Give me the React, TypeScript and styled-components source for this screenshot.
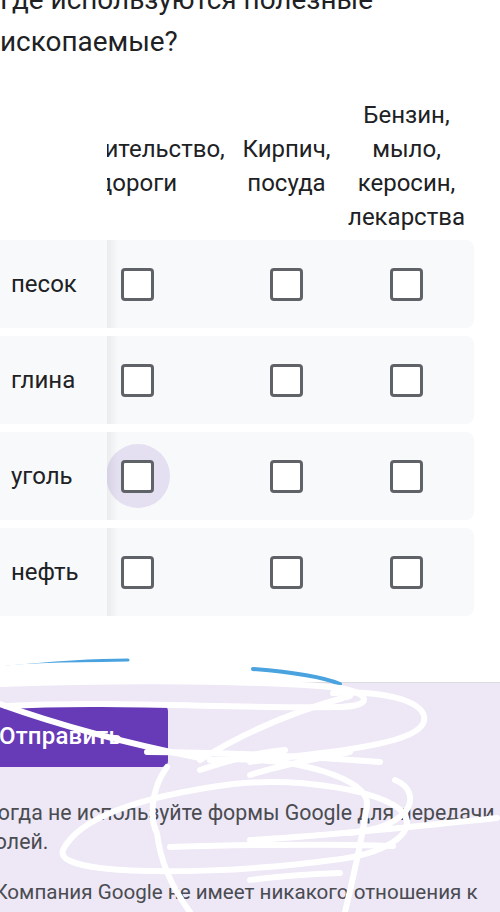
import React, { useLayoutEffect, useRef } from "react";
import styled, { createGlobalStyle } from "styled-components";

const GlobalStyle = createGlobalStyle`
  html, body { margin: 0; padding: 0; }
  body {
    background: #ede7f6;
    font-family: Roboto, "Noto Sans", Arial, sans-serif;
    color: #202124;
    overflow: hidden;
  }
`;

const Viewport = styled.div`
  position: relative;
  width: 500px;
  height: 912px;
  overflow: hidden;
  background: #ede7f6;
`;

const Card = styled.section`
  background: #fff;
  border-bottom: 1px solid #dadce0;
  margin-top: -21px;
  padding-bottom: 66px;
`;

const TitleRow = styled.div`
  display: flex;
  align-items: flex-start;
  gap: 18px;
  padding-right: 28px;
`;

const Title = styled.h2`
  flex: 1;
  margin: 0;
  font-size: 27.9px;
  line-height: 42px;
  font-weight: 400;
  color: #202124;
`;

const Points = styled.span`
  flex: none;
  font-size: 21.8px;
  line-height: 42px;
  color: #70757a;
  margin-top: -7px;
`;

const GridScroller = styled.div`
  width: 474px;
  margin-top: 35px;
  overflow-x: auto;
  scrollbar-width: none;
  &::-webkit-scrollbar { display: none; }
`;

const GridTable = styled.div`
  display: flex;
  flex-direction: column;
  gap: 8px;
  width: max-content;
`;

const cols = "107px 193px 105px 135px";

const HeaderRow = styled.div`
  display: grid;
  grid-template-columns: ${cols};
  align-items: center;
  margin-bottom: -2px;
`;

const CornerCell = styled.div`
  position: sticky;
  left: 0;
  z-index: 2;
  align-self: stretch;
  background: #fff;
`;

const ColumnHead = styled.div`
  padding: 0 6px;
  text-align: center;
  font-size: 24px;
  line-height: 34px;
  color: #202124;
`;

const Row = styled.div`
  display: grid;
  grid-template-columns: ${cols};
  height: 88px;
  background: #f8f9fa;
  border-radius: 8px;
`;

const RowLabel = styled.div`
  position: sticky;
  left: 0;
  z-index: 2;
  display: flex;
  align-items: center;
  padding-left: 11px;
  background: #f8f9fa;
  font-size: 24px;
  color: #202124;

  &::after {
    content: "";
    position: absolute;
    top: 0;
    bottom: 0;
    right: -11px;
    width: 11px;
    background: linear-gradient(to right, rgba(0, 0, 0, 0.055), rgba(0, 0, 0, 0));
  }
`;

const Cell = styled.div`
  display: flex;
  align-items: center;
  justify-content: center;
`;

const BoxHolder = styled.span`
  position: relative;
  z-index: 0;
  display: inline-flex;
`;

const Box = styled.span<{ $focused?: boolean }>`
  position: relative;
  box-sizing: border-box;
  width: 33px;
  height: 33px;
  border: 3px solid #5f6368;
  border-radius: 4px;
  background: #fff;

  &::before {
    content: "";
    display: ${(p) => (p.$focused ? "block" : "none")};
    position: absolute;
    left: 50%;
    top: 50%;
    width: 64px;
    height: 64px;
    margin: -32px 0 0 -32px;
    border-radius: 50%;
    background: #e4dff1;
    z-index: -1;
  }
`;

const Footer = styled.footer`
  margin-left: -41px;
  width: 554px;
  padding-top: 22px;
`;

const SubmitButton = styled.button`
  height: 62px;
  margin-left: 16px;
  padding: 0 46px 0 24px;
  border: none;
  border-radius: 6px;
  background: #673ab7;
  color: #fff;
  font-family: Roboto, "Noto Sans", sans-serif;
  font-size: 24px;
  font-weight: 500;
  letter-spacing: 0.2px;
`;

const Notes = styled.div`
  display: flex;
  flex-direction: column;
  gap: 22px;
  margin-top: 31px;
`;

const Note = styled.p<{ $center?: boolean }>`
  margin: 0;
  padding: ${(p) => (p.$center ? "0 6px" : "0")};
  font-size: ${(p) => (p.$center ? "20.6px" : "21.3px")};
  line-height: 29px;
  color: #4a4c51;
  text-align: ${(p) => (p.$center ? "center" : "left")};
`;

const Scribble = styled.svg`
  position: absolute;
  left: 0;
  top: 0;
  width: 500px;
  height: 912px;
  pointer-events: none;
`;

const columns = ["Строительство, дороги", "Кирпич, посуда", "Бензин, мыло, керосин, лекарства"];
const rows = ["песок", "глина", "уголь", "нефть"];

export default function App() {
  const scroller = useRef<HTMLDivElement>(null);
  useLayoutEffect(() => {
    if (scroller.current) scroller.current.scrollLeft = 9999;
  }, []);

  return (
    <>
      <GlobalStyle />
      <Viewport>
        <Card>
          <TitleRow>
            <Title>Где используются полезные ископаемые?</Title>
            <Points>4 балла</Points>
          </TitleRow>
          <GridScroller ref={scroller}>
            <GridTable>
              <HeaderRow>
                <CornerCell />
                {columns.map((c) => (
                  <ColumnHead key={c}>{c}</ColumnHead>
                ))}
              </HeaderRow>
              {rows.map((r) => (
                <Row key={r}>
                  <RowLabel>{r}</RowLabel>
                  {columns.map((c, i) => (
                    <Cell key={c}>
                      <BoxHolder>
                        <Box $focused={r === "уголь" && i === 0} />
                      </BoxHolder>
                    </Cell>
                  ))}
                </Row>
              ))}
            </GridTable>
          </GridScroller>
        </Card>
        <Footer>
          <SubmitButton>Отправить</SubmitButton>
          <Notes>
            <Note>Никогда не используйте формы Google для передачи паролей.</Note>
            <Note $center>
              Компания Google не имеет никакого отношения к этому контенту. Сообщить о нарушении - Условия использования
            </Note>
          </Notes>
        </Footer>
        <Scribble viewBox="0 0 500 912">
          <g fill="none" strokeLinecap="round" strokeLinejoin="round">
            <path d="M0 668 C 40 664, 90 660, 128 660" stroke="#4aa3df" strokeWidth="3" />
            <path d="M253 669 C 290 672, 320 676, 340 684" stroke="#4aa3df" strokeWidth="4" />
            <circle cx="343" cy="698" r="3" fill="#4aa3df" />
          </g>
          <g fill="none" stroke="#fff" strokeWidth="6" strokeLinecap="round" strokeLinejoin="round">
            <path d="M0 669 C 30 666, 70 664, 130 666" />
            <path d="M2 684 C 120 680, 260 680, 340 688 C 372 694, 372 706, 340 707 C 240 709, 110 700, 6 706" />
            <path d="M0 704 C 50 722, 110 740, 200 758" />
            <path d="M200 760 C 240 735, 290 712, 350 696" />
            <path d="M333 693 C 380 690, 420 700, 424 716 C 428 734, 390 744, 330 752 C 290 757, 260 760, 250 762" />
            <path d="M250 775 C 280 765, 320 758, 350 752" />
            <path d="M147 752 C 220 752, 300 756, 380 762" />
            <path d="M200 770 C 230 760, 260 752, 285 750" />
            <path d="M395 780 C 410 786, 415 800, 405 812 C 390 828, 370 830, 350 833" />
            <path d="M63 850 C 80 815, 150 795, 233 784 C 300 777, 380 790, 403 812 C 420 835, 380 855, 333 860 C 260 870, 160 875, 100 868 C 70 864, 60 858, 63 850" />
            <path d="M167 767 C 150 790, 150 820, 157 833 C 160 860, 170 885, 190 912" />
            <path d="M210 760 C 300 755, 370 780, 367 805 C 362 840, 355 870, 345 912" />
            <path d="M170 847 C 240 845, 320 843, 393 846" />
            <path d="M250 840 C 330 836, 420 826, 497 818" />
            <path d="M250 880 C 280 876, 310 874, 340 873" />
          </g>
        </Scribble>
      </Viewport>
    </>
  );
}
